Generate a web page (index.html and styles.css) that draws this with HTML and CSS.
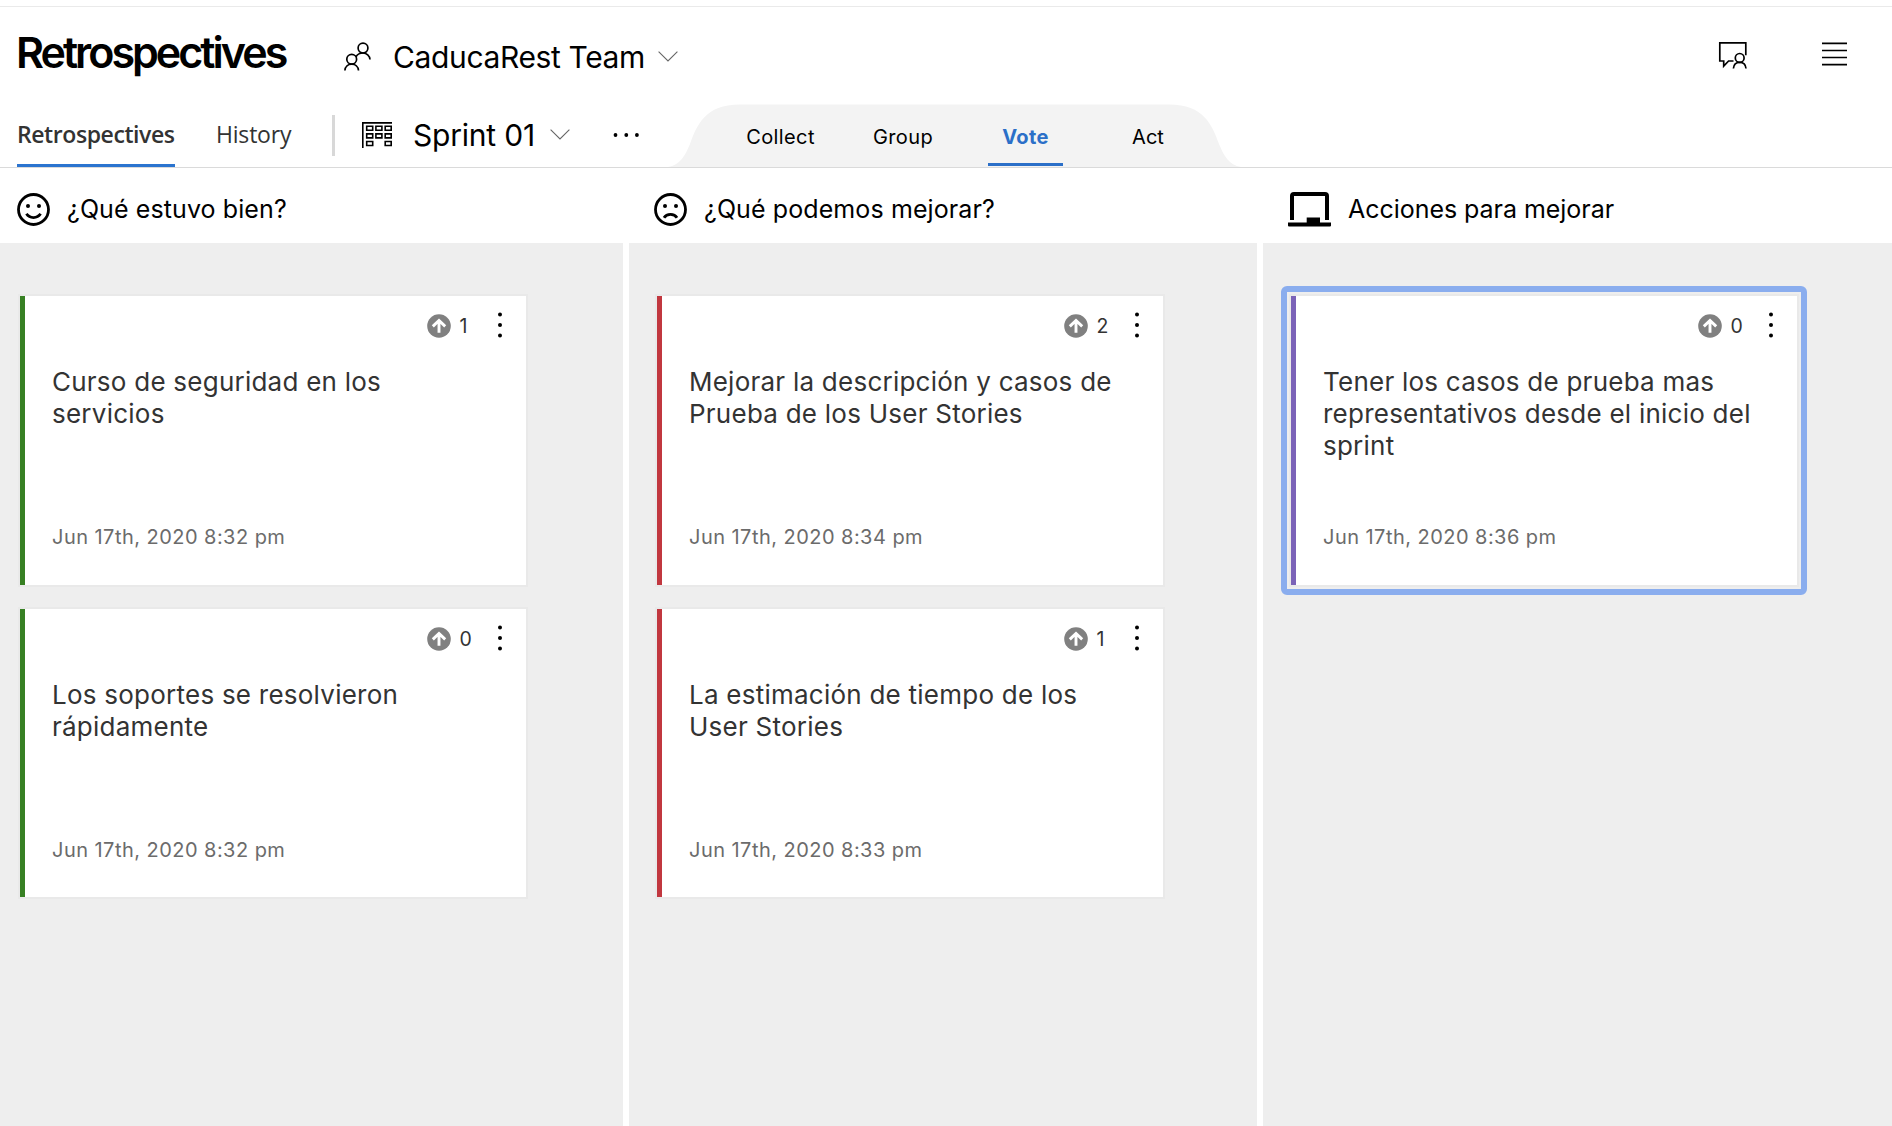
FILE: index.html
```
<!DOCTYPE html>
<html lang="es">
<head>
<meta charset="utf-8">
<title>Retrospectives</title>
<link rel="stylesheet" href="styles.css">
</head>
<body>
<svg class="defs" aria-hidden="true">
  <symbol id="chevron" viewBox="0 0 20 11"><path d="M.6.6 10 10 19.4.6" fill="none" stroke="#666" stroke-width="1.1"/></symbol>
  <symbol id="up" viewBox="0 0 24 24"><circle cx="12" cy="12" r="11.8" fill="#808080"/><path d="M12 18.8V7M5.8 12.4 12 6.4l6.2 6" fill="none" stroke="#fff" stroke-width="2.9"/></symbol>
  <symbol id="dots" viewBox="0 0 6 28"><circle cx="3" cy="3.5" r="2"/><circle cx="3" cy="14" r="2"/><circle cx="3" cy="24.5" r="2"/></symbol>
</svg>

<header class="header">
  <div class="title-row">
    <h1 class="title">Retrospectives</h1>
    <div class="team">
      <svg class="team-icon" viewBox="0 0 28 30" fill="none" stroke="#000" stroke-width="1.7"><circle cx="7.7" cy="18.3" r="4.9"/><path d="M.9 29.5c.3-3.900 3.200-6.300 6.800-6.300s6.500 2.400 6.800 6.300"/><circle cx="19" cy="7.100" r="4.900"/><path d="M12 15.700c1.500-2.400 4-3.700 7-3.700 3.600 0 6.700 2.600 7 6.500"/></svg>
      <span class="team-name">CaducaRest Team</span>
      <svg class="chevron"><use href="#chevron"/></svg>
    </div>
    <div class="tools">
      <svg class="feedback-icon" viewBox="0 0 30 28" fill="none" stroke="#000" stroke-width="1.7"><path d="M27.800 14.200V1.800H1.800V20H5.700V25.200L10.600 20H15.500"/><circle cx="21.700" cy="16.900" r="4.400"/><path d="M15.400 27.500c.3-3.800 2.900-6.200 6.300-6.200s6 2.400 6.300 6.200"/></svg>
      <svg class="menu-icon" viewBox="0 0 25 24" stroke="#000" stroke-width="1.700"><path d="M0 1.400h25M0 8.500h25M0 15.500h25M0 22.600h25"/></svg>
    </div>
  </div>

  <div class="nav-row">
    <nav class="tabs">
      <span class="tab tab-active">Retrospectives</span>
      <span class="tab tab-history">History</span>
    </nav>
    <div class="divider"></div>
    <div class="sprint">
      <svg class="sprint-icon" viewBox="0 0 31 26" fill="none" stroke="#000" stroke-width="1.600"><path d="M.8 26V.9H30"/><path d="M4.700 4.300h6v4h-6zM13.900 4.300h6v4h-6zM23.200 4.300h6v4h-6zM4.700 11.900h6v4h-6zM13.900 11.900h6v4h-6zM23.200 11.900h6v4h-6zM4.700 19.500h6v4h-6zM23.200 19.500h6v4h-6z"/></svg>
      <span class="sprint-name">Sprint 01</span>
      <svg class="chevron"><use href="#chevron"/></svg>
      <svg class="more" viewBox="0 0 28 6"><circle cx="3.500" cy="3" r="1.900"/><circle cx="14.300" cy="3" r="1.900"/><circle cx="24.900" cy="3" r="1.900"/></svg>
    </div>
    <div class="workflow">
      <svg class="workflow-shape" viewBox="0 0 577 63"><path fill="#f3f3f3" d="M2 63C14 61 19 52 24 40C31 21 39 .5 74 .5H503C538 .5 546 21 553 40C558 52 563 61 575 63Z"/></svg>
      <div class="stages">
        <span class="stage">Collect</span>
        <span class="stage">Group</span>
        <span class="stage stage-active">Vote</span>
        <span class="stage stage-act">Act</span>
      </div>
    </div>
  </div>
</header>

<main class="board">
  <section class="column column-good">
    <h2 class="column-head">
      <svg class="face" viewBox="0 0 33 33" fill="none" stroke="#000" stroke-width="2.800"><circle cx="16.500" cy="16.500" r="15"/><circle cx="11" cy="13" r="2" fill="#000" stroke="none"/><circle cx="22" cy="13" r="2" fill="#000" stroke="none"/><path d="M9.400 20.800c3.400 5 10.800 5 14.200 0"/></svg>
      <span class="column-title">¿Qué estuvo bien?</span>
    </h2>
    <div class="cards">
      <article class="card">
        <div class="votes"><svg class="up"><use href="#up"/></svg><span class="count">1</span><svg class="dots"><use href="#dots"/></svg></div>
        <p class="text">Curso de seguridad en los servicios</p>
        <time class="date">Jun 17th, 2020 8:32 pm</time>
      </article>
      <article class="card">
        <div class="votes"><svg class="up"><use href="#up"/></svg><span class="count">0</span><svg class="dots"><use href="#dots"/></svg></div>
        <p class="text">Los soportes se resolvieron rápidamente</p>
        <time class="date">Jun 17th, 2020 8:32 pm</time>
      </article>
    </div>
  </section>

  <section class="column column-improve">
    <h2 class="column-head">
      <svg class="face" viewBox="0 0 33 33" fill="none" stroke="#000" stroke-width="2.800"><circle cx="16.500" cy="16.500" r="15"/><circle cx="11" cy="13" r="2" fill="#000" stroke="none"/><circle cx="22" cy="13" r="2" fill="#000" stroke="none"/><path d="M10 24.800c2.800-4.600 10.200-4.600 13 0"/></svg>
      <span class="column-title">¿Qué podemos mejorar?</span>
    </h2>
    <div class="cards">
      <article class="card">
        <div class="votes"><svg class="up"><use href="#up"/></svg><span class="count">2</span><svg class="dots"><use href="#dots"/></svg></div>
        <p class="text">Mejorar la descripción y casos de Prueba de los User Stories</p>
        <time class="date">Jun 17th, 2020 8:34 pm</time>
      </article>
      <article class="card">
        <div class="votes"><svg class="up"><use href="#up"/></svg><span class="count">1</span><svg class="dots"><use href="#dots"/></svg></div>
        <p class="text">La estimación de tiempo de los User Stories</p>
        <time class="date">Jun 17th, 2020 8:33 pm</time>
      </article>
    </div>
  </section>

  <section class="column column-actions">
    <h2 class="column-head">
      <svg class="laptop" viewBox="0 0 43 35"><path d="M4 28V4q0-2 2-2h31q2 0 2 2v24" fill="none" stroke="#000" stroke-width="4"/><path d="M0 30.500h18.700v-5h13.300v5h11v3q0 1-1 1H1q-1 0-1-1z"/></svg>
      <span class="column-title actions-title">Acciones para mejorar</span>
    </h2>
    <div class="cards">
      <article class="card card-focused">
        <div class="votes"><svg class="up"><use href="#up"/></svg><span class="count">0</span><svg class="dots"><use href="#dots"/></svg></div>
        <p class="text">Tener los casos de prueba mas representativos desde el inicio del sprint</p>
        <time class="date">Jun 17th, 2020 8:36 pm</time>
      </article>
    </div>
  </section>
</main>
</body>
</html>
```
FILE: styles.css
```
* { box-sizing: border-box; }
body {
  margin: 0;
  height: 1126px;
  overflow: hidden;
  display: flex;
  flex-direction: column;
  padding-top: 6px;
  background: #fff;
  color: #000;
  font-family: Inter, "Liberation Sans", sans-serif;
}
svg { display: block; flex: none; }
.defs { width: 0; height: 0; display: none; }

.header {
  flex: none;
  height: 162px;
  border-top: 1px solid #eaeaea;
  border-bottom: 1px solid #dadada;
}
.title-row { display: flex; height: 90px; padding-left: 16px; }
.title {
  margin: 0;
  width: 328px;
  font-size: 43px;
  font-weight: 600;
  line-height: 91px;
  letter-spacing: -3px;
  white-space: nowrap;
}
.team { display: flex; align-items: center; padding-top: 10px; height: 90px; }
.team-icon { width: 28px; height: 30px; margin-top: -2px; }
.team-name { width: 265px; margin-left: 21px; font-size: 30px; letter-spacing: -0.37px; white-space: nowrap; }
.chevron { width: 20px; height: 11px; margin-bottom: 2px; }
.tools { display: flex; align-items: flex-start; margin-left: auto; padding: 35px 45px 0 0; gap: 74px; }
.feedback-icon { width: 30px; height: 28px; margin-top: -1px; }
.menu-icon { width: 25px; height: 24px; }

.nav-row { display: flex; align-items: flex-end; height: 70px; padding-left: 17px; }
.tabs { display: flex; gap: 41px; }
.tab {
  height: 63px;
  line-height: 60px;
  border-bottom: 3px solid transparent;
  color: #333;
  font-family: "Open Sans", "Noto Sans", sans-serif;
  font-size: 23px;
  white-space: nowrap;
}
.tab-active { width: 158px; border-color: #2b74cf; font-weight: 600; letter-spacing: -0.42px; }
.tab-history { width: 76px; letter-spacing: -0.2px; }
.divider { width: 3px; height: 41px; margin: 0 27px 11px 40px; background: #d8d8d8; }
.sprint { display: flex; align-items: center; height: 64px; }
.sprint-icon { width: 31px; height: 26px; }
.sprint-name { width: 137px; margin-left: 20px; font-size: 30px; letter-spacing: -0.2px; white-space: nowrap; }
.more { width: 28px; height: 6px; margin-left: 42px; }
.workflow { display: grid; width: 577px; height: 63px; margin-left: 26px; }
.workflow-shape, .stages { grid-area: 1 / 1; }
.workflow-shape { width: 577px; height: 63px; }
.stages { display: flex; padding: 0 0 1px 68px; }
.stage {
  flex: none;
  height: 62px;
  padding: 7px 0 0;
  border-bottom: 3px solid transparent;
  font-size: 20px;
  line-height: 52px;
  letter-spacing: 0.4px;
  text-align: center;
}
.stage:nth-child(1) { width: 93px; }
.stage:nth-child(2) { width: 76px; margin-left: 38px; }
.stage:nth-child(3) { width: 75px; margin-left: 47px; }
.stage:nth-child(4) { width: 54px; margin-left: 58px; letter-spacing: 0; }
.stage-active { border-color: #2b6fc8; color: #2b6fc8; font-weight: 700; }

.board { flex: 1; display: grid; grid-template-columns: 623px 628px 629px; gap: 6px; }
.column { display: flex; flex-direction: column; }
.column-head {
  display: flex;
  align-items: center;
  gap: 17px;
  height: 75px;
  margin: 0;
  padding: 8px 0 0 25px;
  font-size: 25px;
  font-weight: 400;
  letter-spacing: 0.1px;
  white-space: nowrap;
}
.column-title { padding-bottom: 2px; }
.face { width: 33px; height: 33px; }
.laptop { width: 43px; height: 35px; }
.actions-title { letter-spacing: -0.04px; }
.cards {
  flex: 1;
  display: flex;
  flex-direction: column;
  gap: 24px;
  padding: 53px 0 0 28px;
  background: #eee;
}
.column-good .column-head { padding-left: 17px; }
.column-good .cards { padding-left: 20px; }
.card {
  position: relative;
  display: flex;
  flex-direction: column;
  width: 506px;
  height: 289px;
  padding: 0 20px 0 27px;
  border-left: 5px solid #378023;
  background: #fff;
  box-shadow: 0 0 0 2px #e9e9e9;
}
.card + .card { height: 288px; }
.column-improve .card { border-left-color: #c1373f; }
.column-actions .card { border-left-color: #7b63b8; }
.card-focused::after {
  content: "";
  position: absolute;
  inset: -10px -10px -10px -15px;
  border: 6px solid #8aadee;
  border-radius: 6px;
}
.votes { display: flex; align-items: center; height: 59px; padding-left: 375px; }
.up { width: 24px; height: 24px; margin-top: 1px; }
.count { width: 37px; margin-left: 8px; padding-left: 0.5px; color: #333; font-size: 19.5px; }
.dots { width: 6px; height: 28px; margin-top: -1px; }
.votes .dots { margin-left: 1px; }
.text {
  width: 440px;
  height: 148px;
  margin: 10.5px 0 0;
  color: #333;
  font-size: 26px;
  line-height: 32px;
  letter-spacing: 0.24px;
}
.date { margin-top: 11.5px; color: #6b6b6b; font-size: 20px; line-height: 24px; letter-spacing: 0.46px; }
```
